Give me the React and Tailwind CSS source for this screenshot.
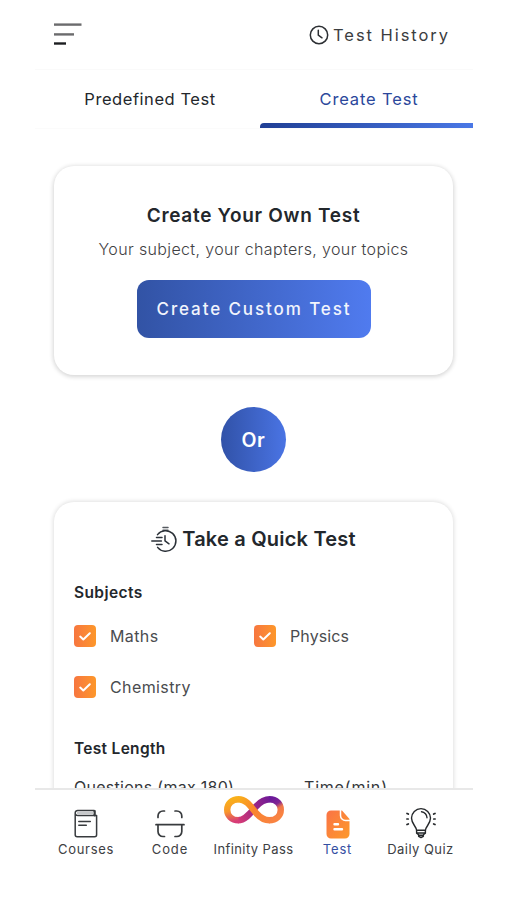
// src/App.jsx
import React, { useState } from 'react';

const MenuIcon = () => (
  <svg width="28" height="24" viewBox="0 0 28 24" fill="none" strokeWidth="2.4">
    <path d="M0 1.6h27.5" stroke="#6b6b6d" />
    <path d="M0 11.4h20" stroke="#6b6b6d" />
    <path d="M0 20.5h12" stroke="#1c1d20" />
  </svg>
);

const ClockIcon = () => (
  <svg width="20" height="20" viewBox="0 0 20 20" fill="none" stroke="#2c2f33" strokeWidth="1.5" strokeLinecap="round">
    <circle cx="10" cy="10" r="8.7" />
    <path d="M9.3 5.3v4.9l3.7 2.6" />
  </svg>
);

const QuickIcon = () => (
  <svg width="27" height="27" viewBox="0 0 27 27" fill="none" stroke="#2b3138" strokeWidth="1.5" strokeLinecap="round">
    <path d="M12 1.6h5M12 4.2h5" stroke="#555a60" />
    <path d="M6.5 8.6A10.3 10.3 0 1 1 6.6 21.4" />
    <path d="M14 9.8v5l4 3" />
    <path d="M5.5 11.5H11M.8 15h9.6M5.5 18.5H11" />
  </svg>
);

const CoursesIcon = () => (
  <svg width="24" height="30" viewBox="0 0 24 30" fill="none" stroke="#383b3e" strokeWidth="1.5" strokeLinejoin="round" strokeLinecap="round">
    <path d="M1.2 3.7v22.1a2 2 0 0 0 2 2h17.4a2 2 0 0 0 2-2V6.6H3.8a2.6 2.6 0 0 1-2.6-2.7A2.5 2.5 0 0 1 3.8 1.4h16.4v5" />
    <path d="M4 4h15" stroke="#c6c8ca" strokeWidth="2.5" />
    <path d="M20.8 2v4.5" strokeWidth="2" />
    <path d="M4.8 12.4h11.5M4.8 16.2h7.5" />
  </svg>
);

const CodeIcon = () => (
  <svg width="30" height="30" viewBox="0 0 30 30" fill="none" stroke="#383b3e" strokeWidth="1.7" strokeLinecap="round">
    <path d="M3 8.5V7a5 5 0 0 1 5-5h1.5M20 2h1.8a5 5 0 0 1 5 5v1.5" />
    <path d="M1 15.7h28" />
    <path d="M3 16v6.5a5 5 0 0 0 5 5h1.5M20 27.5h1.8a5 5 0 0 0 5-5V16" />
  </svg>
);

const InfinityIcon = () => (
  <svg width="62" height="30" viewBox="0 0 62 30" fill="none" strokeWidth="6.4">
    <defs>
      <linearGradient id="infBack" gradientUnits="userSpaceOnUse" x1="14" y1="24" x2="50" y2="5">
        <stop offset="0" stopColor="#d73b77" />
        <stop offset=".45" stopColor="#a32a83" />
        <stop offset="1" stopColor="#6a189a" />
      </linearGradient>
      <linearGradient id="infFront" gradientUnits="userSpaceOnUse" x1="14" y1="4" x2="48" y2="26">
        <stop offset="0" stopColor="#f9b01a" />
        <stop offset=".5" stopColor="#fa852c" />
        <stop offset="1" stopColor="#f98341" />
      </linearGradient>
      <linearGradient id="infLeft" gradientUnits="userSpaceOnUse" x1="9" y1="4" x2="14" y2="26">
        <stop offset="0" stopColor="#f9b01a" />
        <stop offset=".5" stopColor="#f8972c" />
        <stop offset="1" stopColor="#d73b77" />
      </linearGradient>
      <linearGradient id="infRight" gradientUnits="userSpaceOnUse" x1="47" y1="4" x2="57" y2="20">
        <stop offset="0" stopColor="#6a189a" />
        <stop offset=".4" stopColor="#7f2494" />
        <stop offset=".65" stopColor="#f0784a" />
        <stop offset="1" stopColor="#f98341" />
      </linearGradient>
    </defs>
    <path d="M15 25.3C23 25.3 29 16 33 11.5 38 6 41.5 4.3 47 4.3" stroke="url(#infBack)" />
    <path d="M16 4.3C8.5 4.3 4.2 9 4.2 14.8S8.5 25.3 15.5 25.3" stroke="url(#infLeft)" />
    <path d="M46.5 4.3C53.5 4.3 57.8 9 57.8 14.8S53.5 25.3 46 25.3" stroke="url(#infRight)" />
    <path d="M15.5 4.3C24 4.3 28.5 13 33.5 18.5 38 23.5 41.5 25.3 46.5 25.3" stroke="url(#infFront)" />
  </svg>
);

const TestIcon = () => (
  <svg width="24" height="29" viewBox="0 0 24 29">
    <defs>
      <linearGradient id="docFill" x1="0" y1="0" x2="1" y2="1">
        <stop offset="0" stopColor="#fa7346" />
        <stop offset="1" stopColor="#fd9a2b" />
      </linearGradient>
    </defs>
    <path d="M5 .5h11L23.500 9V24a4.500 4.500 0 0 1-4.500 4.500H5A4.500 4.500 0 0 1 .5 24V5A4.500 4.500 0 0 1 5 .5z" fill="url(#docFill)" />
    <path d="M14.500 0v5.500a5 5 0 0 0 5 5H24" fill="none" stroke="#fff" strokeWidth="1.500" />
    <path d="M8.500 14.200h3.500M8.500 19.200h7.500" stroke="#fff" strokeWidth="2.400" strokeLinecap="round" />
  </svg>
);

const BulbIcon = () => (
  <svg width="30" height="32" viewBox="0 0 30 32" fill="none" stroke="#25282b" strokeWidth="1.4" strokeLinecap="round" strokeLinejoin="round">
    <path d="M10.5 23.3c0-4-5-6.2-5-12.2a9.5 9.5 0 0 1 19 0c0 6-5 8.2-5 12.2z" />
    <path d="M15.5 4.8a6 6 0 0 1 5.5 6" />
    <path d="M10.6 23.5v2.7l2 1.5v1.6l2.4 1.2 2.4-1.2v-1.6l2-1.5v-2.7M11 26h8M12.8 28.2h4.4" />
    <path d="M1 6.500l1.300.6M.8 12h1.400M1 17.500l1.300-.6M29 6.500l-1.300.6M29.200 12h-1.400M29 17.500l-1.300-.6" strokeWidth="1.700" />
  </svg>
);

function Subject({ label, className, checked, onChange }) {
  return (
    <button onClick={onChange} className="flex h-[24px] items-center text-left">
      <span className="flex h-[22px] w-[22px] items-center justify-center rounded-[4px] bg-gradient-to-r from-[#f7763f] to-[#fd9729]">
        {checked && (
          <svg width="12" height="9" viewBox="0 0 12 9" fill="none" stroke="#fff" strokeWidth="2" strokeLinecap="round" strokeLinejoin="round">
            <path d="M1.2 4.6l3.1 2.9L10.8 1.2" />
          </svg>
        )}
      </span>
      <span className={`ml-[14px] text-[16px] leading-6 text-[#4a4c4f] ${className}`}>{label}</span>
    </button>
  );
}

const subjects = [
  { label: 'Maths', className: 'tracking-[0.4px]' },
  { label: 'Physics', className: 'tracking-[0.1px]' },
  { label: 'Chemistry', className: 'tracking-[0.4px]' },
];

const navItems = [
  { label: 'Courses', icon: <CoursesIcon />, className: 'tracking-[0.7px]' },
  { label: 'Code', icon: <CodeIcon />, className: 'tracking-[0.9px]' },
  { label: 'Infinity Pass', icon: <InfinityIcon />, className: 'tracking-[0.4px]', raised: true },
  { label: 'Test', icon: <TestIcon />, className: 'tracking-[0.8px]', active: true },
  { label: 'Daily Quiz', icon: <BulbIcon />, className: 'tracking-[0.45px]' },
];

function App() {
  const [checked, setChecked] = useState({ Maths: true, Physics: true, Chemistry: true });

  const toggle = (label) => setChecked({ ...checked, [label]: !checked[label] });

  return (
    <div className="h-[900px] w-[506px] overflow-hidden bg-white pl-[35px] font-['Inter',sans-serif] whitespace-nowrap text-[#23272c]">
      <div className="flex h-[900px] w-[438px] flex-col">
        <header className="flex h-[70px] shrink-0 items-center justify-between border-b border-[#fafafa] pr-[23px] pl-[19px]">
          <MenuIcon />
          <button className="flex items-center gap-[4px]">
            <ClockIcon />
            <span className="pt-[2px] text-[16.5px] tracking-[1.95px] text-[#3b3d40]">Test History</span>
          </button>
        </header>

        <div className="grid h-[59px] shrink-0 grid-cols-[225px_213px] border-b border-[#fbfbfb] text-[16.5px]">
          <button className="pl-[5px] tracking-[0.55px]">Predefined Test</button>
          <button className="flex flex-col items-center text-[#2b479b]">
            <span className="flex grow items-center pt-[5px] pl-[5px] tracking-[0.85px]">Create Test</span>
            <span className="h-[5px] w-full rounded-tl-[4px] bg-gradient-to-r from-[#203f95] to-[#4a78e6]" />
          </button>
        </div>

        <main className="min-h-0 grow overflow-hidden pt-[37px] pr-[20px] pl-[19px]">
          <section className="flex h-[209px] flex-col items-center rounded-[20px] bg-white pt-[37px] shadow-[0_1px_4px_1px_rgba(0,0,0,0.16)]">
            <h2 className="text-[19px] leading-[26px] font-semibold tracking-[0.7px]">Create Your Own Test</h2>
            <p className="mt-[8px] text-[16px] leading-6 font-light tracking-[0.36px] text-[#3f4144]">
              Your subject, your chapters, your topics
            </p>
            <button className="mt-[19px] h-[58px] w-[234px] rounded-[12px] bg-gradient-to-r from-[#3253a5] to-[#507bef] pt-px pl-px text-[17px] font-medium tracking-[1.9px] text-[#f1f4fc]">
              Create Custom Test
            </button>
          </section>

          <div className="mx-auto mt-[32px] flex h-[65px] w-[65px] items-center justify-center rounded-full bg-gradient-to-r from-[#3152a8] to-[#4a74e4] pt-[2px] text-[19.5px] font-semibold tracking-[0.6px] text-white">
            Or
          </div>

          <section className="mt-[30px] h-[420px] rounded-[20px] bg-white px-[20px] pt-[24px] shadow-[0_0_4px_1px_rgba(0,0,0,0.12)]">
            <div className="flex items-center justify-center gap-[4px]">
              <QuickIcon />
              <h2 className="text-[20px] leading-[27px] font-semibold tracking-[0.2px]">Take a Quick Test</h2>
            </div>

            <h3 className="mt-[28px] text-[15.5px] leading-6 font-semibold tracking-[0.4px]">Subjects</h3>
            <div className="mt-[19px] grid grid-cols-[180px_1fr] gap-y-[27px]">
              {subjects.map((s) => (
                <Subject
                  key={s.label}
                  {...s}
                  checked={checked[s.label]}
                  onChange={() => toggle(s.label)}
                />
              ))}
            </div>

            <h3 className="mt-[38px] text-[15.5px] leading-6 font-semibold tracking-[0.3px]">Test Length</h3>
            <div className="mt-[14px] grid grid-cols-[230px_1fr] text-[16px] leading-6 text-[#33363a]">
              <span className="tracking-[0.27px]">Questions (max 180)</span>
              <span className="tracking-[0.8px]">Time(min)</span>
            </div>
          </section>
        </main>

        <nav className="grid h-[112px] shrink-0 grid-cols-[102px_66px_101px_67px_99px] border-t-2 border-[#e8e8e8] bg-white">
          {navItems.map((item) => (
            <button key={item.label} className="flex flex-col items-center">
              <span className={item.raised ? 'flex h-[49px] items-start pt-[5px]' : 'flex h-[49px] items-end'}>
                {item.icon}
              </span>
              <span className={`text-[13px] leading-[20px] ${item.active ? 'text-[#3450a3]' : 'text-[#3d4043]'} ${item.className}`}>
                {item.label}
              </span>
            </button>
          ))}
        </nav>
      </div>
    </div>
  );
}

export default App;
